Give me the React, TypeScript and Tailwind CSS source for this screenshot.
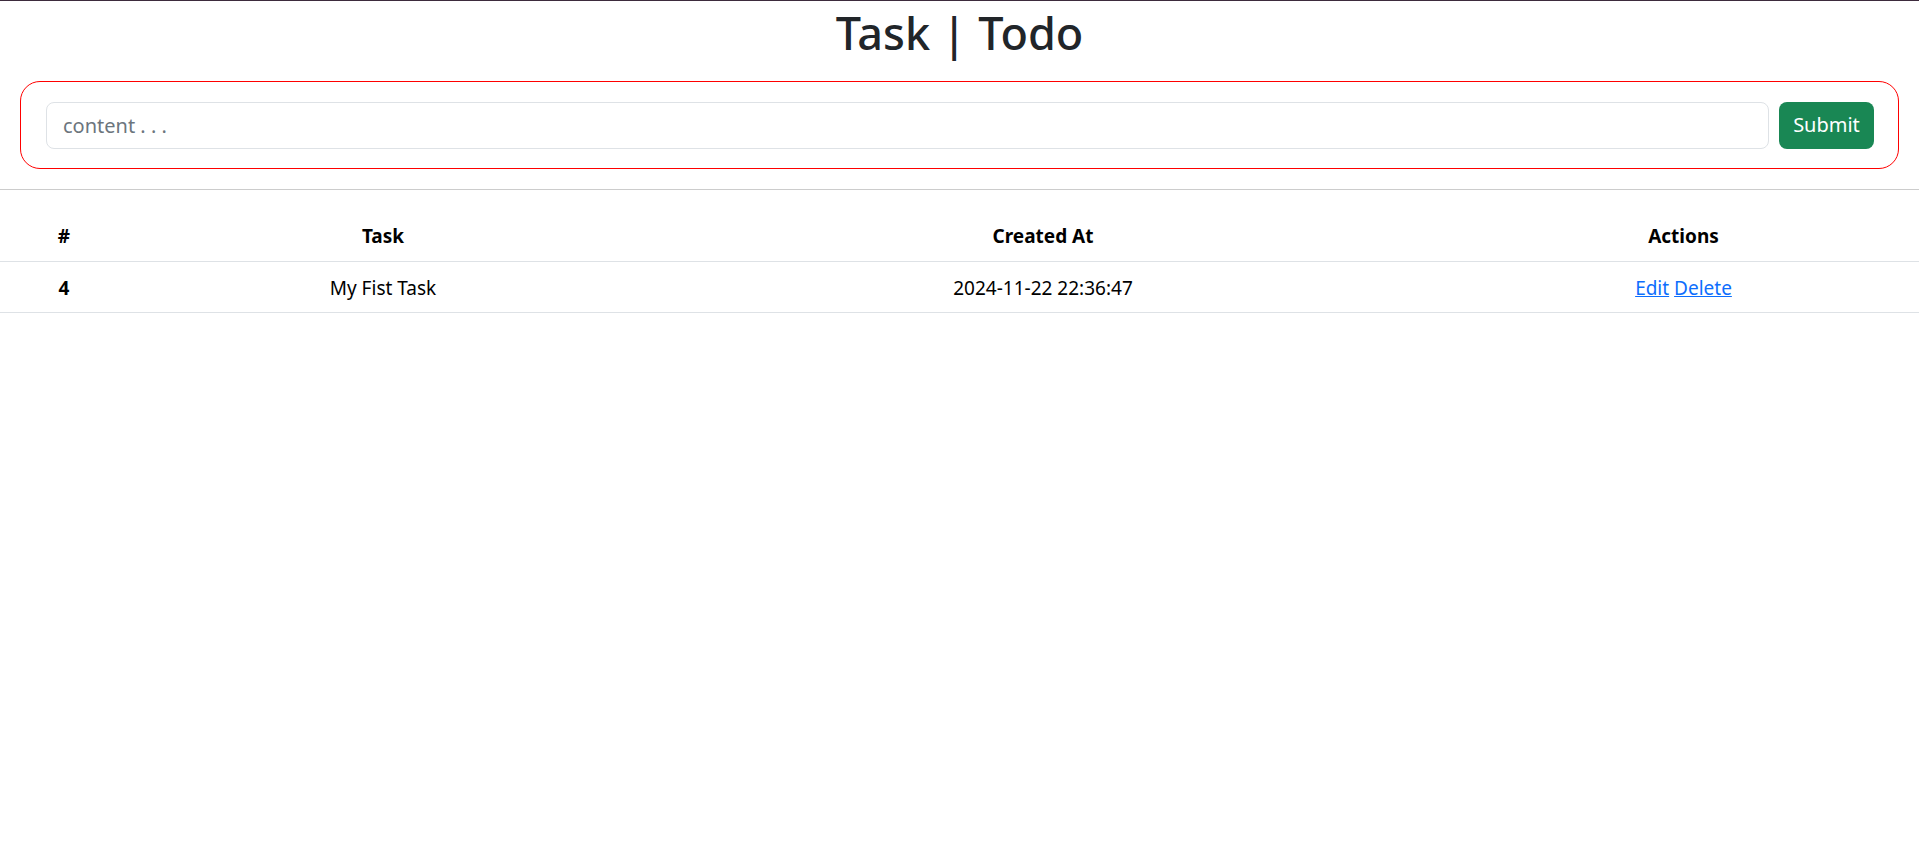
import React, { useState } from 'react';

type Task = {
  id: number;
  content: string;
  createdAt: string;
};

const font = { fontFamily: '"Noto Sans", "Open Sans", sans-serif' };

export default function App() {
  const [tasks] = useState<Task[]>([
    { id: 4, content: 'My Fist Task', createdAt: '2024-11-22 22:36:47' },
  ]);
  const [content, setContent] = useState('');

  return (
    <div className="min-h-screen bg-white border-t border-[#3d2b3d]" style={font}>
      <h1 className="text-center text-[45px] leading-[48px] font-medium text-[#212529] pt-[8px]">
        Task | Todo
      </h1>

      <form
        onSubmit={(e) => e.preventDefault()}
        className="mx-5 mt-[24px] h-[88px] rounded-[20px] border border-[#ff0000] pl-[25px] pr-[24px] flex items-center gap-[10px]"
      >
        <input
          value={content}
          onChange={(e) => setContent(e.target.value)}
          placeholder="content . . ."
          className="flex-1 h-[47px] rounded-lg border border-[#dee2e6] px-4 text-[20px] text-[#212529] placeholder:text-[#6c757d] outline-none"
        />
        <button
          type="submit"
          className="h-[47px] w-[95px] rounded-lg bg-[#198754] text-white text-[20px]"
        >
          Submit
        </button>
      </form>

      <hr className="mt-5 border-t border-[#cccccc]" />

      <table className="w-full table-fixed mt-[22px] text-[19px] text-black">
        <colgroup>
          <col className="w-[128px]" />
          <col className="w-[510px]" />
          <col className="w-[810px]" />
          <col />
        </colgroup>
        <thead>
          <tr className="border-b border-[#dee2e6]">
            <th className="h-[49px] font-bold text-center">#</th>
            <th className="font-bold text-center">Task</th>
            <th className="font-bold text-center">Created At</th>
            <th className="font-bold text-center">Actions</th>
          </tr>
        </thead>
        <tbody>
          {tasks.map((t) => (
            <tr key={t.id} className="border-b border-[#dee2e6]">
              <th className="h-[51px] pt-[3px] font-bold text-center">{t.id}</th>
              <td className="pt-[3px] text-center">{t.content}</td>
              <td className="pt-[3px] text-center">{t.createdAt}</td>
              <td className="pt-[3px] text-center">
                <a href="#" className="text-[#0d6efd] underline">Edit</a>{' '}
                <a href="#" className="text-[#0d6efd] underline">Delete</a>
              </td>
            </tr>
          ))}
        </tbody>
      </table>
    </div>
  );
}
